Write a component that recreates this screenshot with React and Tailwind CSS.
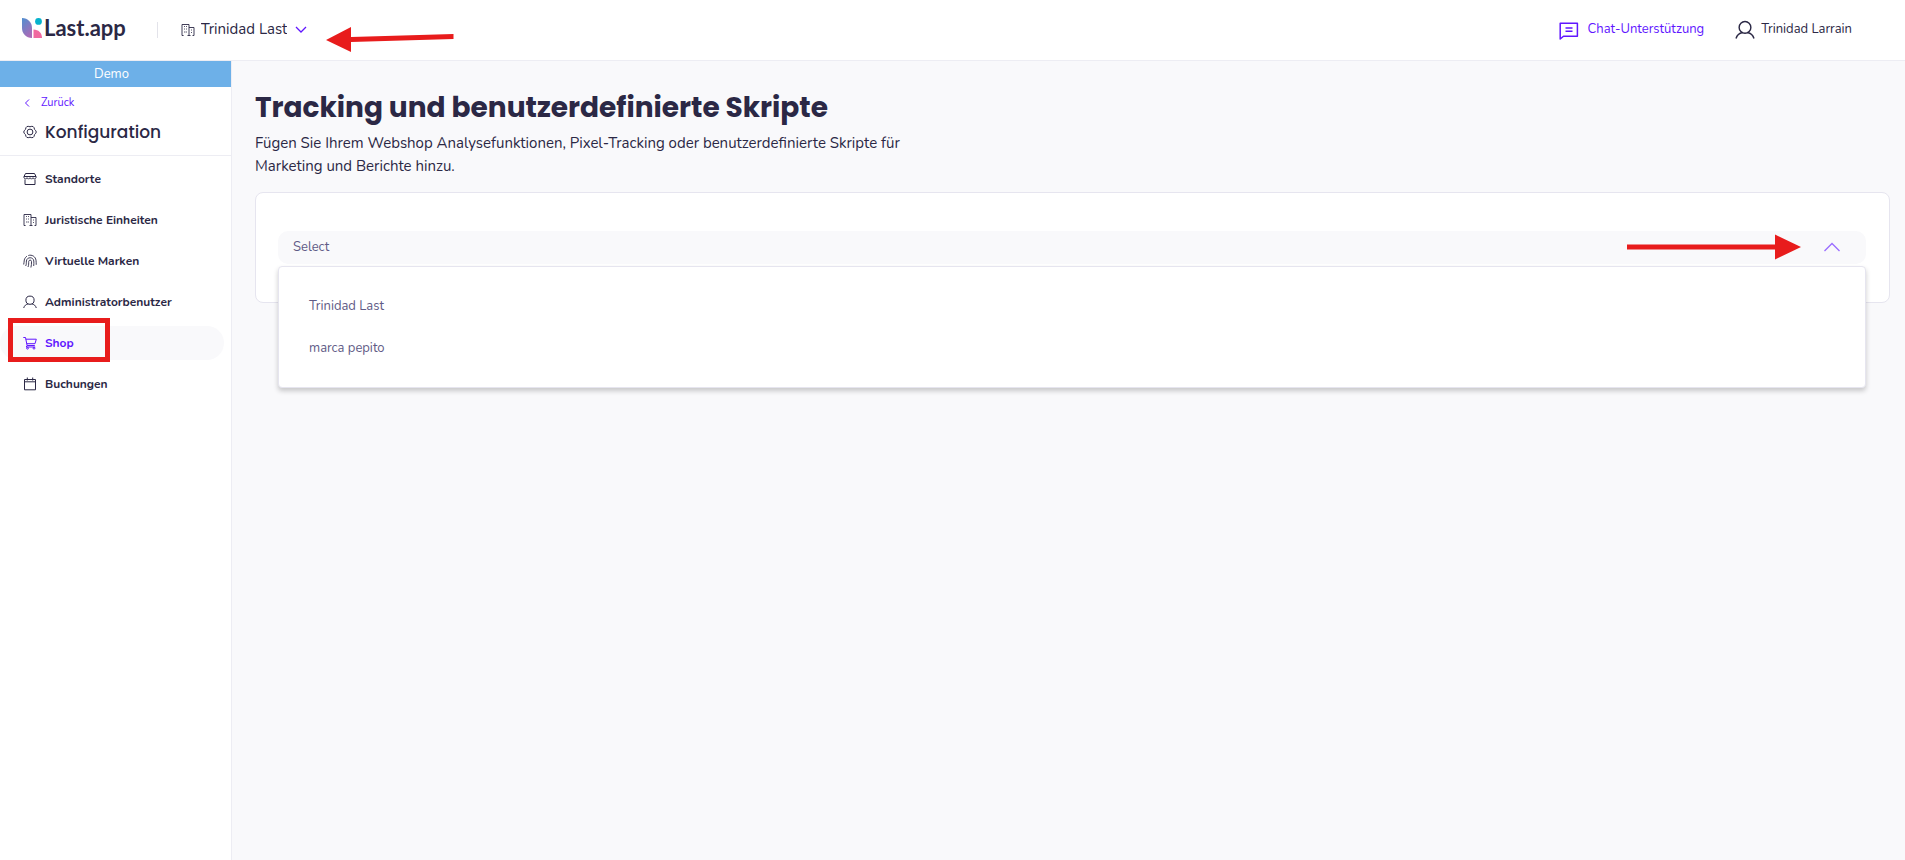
import React, { useState } from 'react';

const Icon = ({ children, className = 'w-[14px] h-[14px]', strokeWidth = 1 }) => (
  <svg
    viewBox="0 0 14 14"
    fill="none"
    stroke="currentColor"
    strokeWidth={strokeWidth}
    className={`shrink-0 ${className}`}
    aria-hidden="true"
  >
    {children}
  </svg>
);

const StoreIcon = () => (
  <Icon>
    <path d="M2.500 1.500h9M2.500 1.500 1 4.500h12l-1.500-3M2 7.500v5h10v-5" />
    <path d="M1 4.500v1.200l1.500 1.500L4 5.700l1.500 1.500L7 5.700l1.500 1.500L10 5.700l1.500 1.500L13 5.700V4.500" />
  </Icon>
);

const BuildingIcon = ({ className }) => (
  <Icon className={className} strokeWidth=".9">
    <path d="M2.600 12.500H1V1.500h7v11H6.500M8 4.500h5v8h-1.500M8 12.500h1.500" />
    <path d="M3 3.500h1M5 3.500h1M3 6h1M5 6h1M4.500 9H3M5 9h1M10 7h1M10 9.500h1" strokeWidth=".8" />
  </Icon>
);

const FingerprintIcon = () => (
  <Icon strokeWidth=".9">
    <path d="M.7 10.500C1.300 9 .8 7.600 1.300 5.900 1.800 4.100 2.800 2.900 4 2.200M5.300 1.500C9 .3 12.500 2.600 13 6.300c.2 1.600.2 3 .2 4.500" />
    <path d="M2.700 12c.9-1.800.5-3.400.7-5C3.900 2.600 10.400 2.700 10.800 7c.1 1.700.1 3.200-.1 5" />
    <path d="M5 13c.9-1.900.6-4 .7-5.500.2-1.900 2.700-1.900 2.800 0 .1 2-.1 4-.6 6" />
  </Icon>
);

const UserIcon = ({ className }) => (
  <Icon className={className}>
    <circle cx="7" cy="5.200" r="4.100" />
    <path d="M.7 13c.7-2.400 2.400-3.800 4.600-4.200M13.300 13c-.7-2.400-2.400-3.800-4.600-4.200" />
  </Icon>
);

const CartIcon = () => (
  <Icon>
    <path d="M.3 1.500h2.200l1.600 8h7.700M2.800 3.200h10.500L12 7.700H3.700" />
    <path d="M4.100 9.500 3.200 11h9" />
    <circle cx="4.500" cy="12.200" r=".9" />
    <circle cx="11" cy="12.200" r=".9" />
  </Icon>
);

const CalendarIcon = () => (
  <Icon>
    <path d="M1.500 2.500h11v10.300h-11zM1.500 4.800h11M4.300.5v3M9.700.5v3" />
  </Icon>
);

const GearIcon = () => (
  <Icon>
    <path d="M11.500 9.600Q11 13.900 7 12.200 3 13.900 2.500 9.600-1 7 2.500 4.400 3 .1 7 1.800 11 .1 11.500 4.400 15 7 11.500 9.600z" />
    <circle cx="7" cy="7" r="2.900" />
  </Icon>
);

const ChatIcon = () => (
  <svg viewBox="0 0 20 20" fill="none" stroke="currentColor" strokeWidth="1.500" className="w-5 h-5 shrink-0" aria-hidden="true">
    <path d="M1.200 19V3.200h17.200v13H4.500z" strokeLinejoin="round" />
    <path d="M6.500 8h7M6.500 11.300h7" />
  </svg>
);

const LogoMark = () => (
  <svg viewBox="0 0 20 20" className="w-5 h-5 shrink-0" aria-hidden="true">
    <defs>
      <linearGradient id="leaf" x1="0" y1="0" x2="0.500" y2="1">
        <stop offset="0" stopColor="#4f8fd0" />
        <stop offset="1" stopColor="#a86cb8" />
      </linearGradient>
    </defs>
    <path d="M0 0c6 0 10 4.500 10 10v10C4 20 0 15.500 0 10z" fill="url(#leaf)" />
    <path d="M11.500 11.500c5 0 8.500 3.500 8.500 8.500h-8.500z" fill="#f0699f" />
    <circle cx="16.500" cy="3.400" r="3.400" fill="#06b2cd" />
  </svg>
);

const menu = [
  { label: 'Standorte', icon: StoreIcon },
  { label: 'Juristische Einheiten', icon: BuildingIcon },
  { label: 'Virtuelle Marken', icon: FingerprintIcon },
  { label: 'Administratorbenutzer', icon: UserIcon },
  { label: 'Shop', icon: CartIcon, active: true },
  { label: 'Buchungen', icon: CalendarIcon },
];

const brands = ['Trinidad Last', 'marca pepito'];

export default function App() {
  const [open, setOpen] = useState(true);
  const [brand, setBrand] = useState('Select');

  const pickBrand = (name) => {
    setBrand(name);
    setOpen(false);
  };

  return (
    <div className="min-h-screen flex flex-col bg-[#f9f9fb] text-[#2b2845] font-['Nunito','Open_Sans',sans-serif]">
      {/* Header */}
      <header className="h-[61px] shrink-0 flex items-center justify-between bg-white border-b border-[#ededf3] pl-[22px] pr-[53px] pb-px">
        <div className="flex items-center">
          <a href="#" className="flex items-center gap-[2px] pb-1 font-['Lato',sans-serif] font-bold text-[22px] leading-6">
            <LogoMark />
            Last.app
          </a>
          <div className="w-px h-4 bg-[#e3e3ea] ml-[31px] mr-[23px]" />
          <div className="relative flex items-center gap-[6px]">
            <BuildingIcon />
            <select
              aria-label="Organisation"
              className="appearance-none bg-transparent text-[15px] pr-5 [field-sizing:content]"
            >
              <option>Trinidad Last</option>
            </select>
            <svg viewBox="0 0 12 8" className="absolute right-0 w-3 h-2 text-[#6116ff] pointer-events-none" fill="none" stroke="currentColor" strokeWidth="1.300" aria-hidden="true">
              <path d="m1 1 5 5 5-5" />
            </svg>
            <svg viewBox="0 0 128 26" className="absolute left-full -bottom-3 ml-[19px] w-32 h-[26px] pointer-events-none" fill="#e81c1c" aria-hidden="true">
              <path d="M0 13 25 0v10L127.500 7v5L25 15v10z" />
            </svg>
          </div>
        </div>
        <div className="flex items-center gap-[31px] text-[13px]">
          <a href="#" className="flex items-center gap-[9px] text-[#6116ff]">
            <ChatIcon />
            Chat-Unterstützung
          </a>
          <a href="#" className="flex items-center gap-[6px]">
            <UserIcon className="w-5 h-5" />
            Trinidad Larrain
          </a>
        </div>
      </header>

      <div className="flex-1 flex">
        {/* Sidebar */}
        <aside className="w-[232px] shrink-0 bg-white border-r border-[#ededf3]">
          <div className="h-[26px] bg-[#6db0e8] text-white text-[13px] leading-[26px] text-center pr-2">Demo</div>
          <div className="h-[69px] border-b border-[#ededf3] pl-[23px] pt-[7px]">
            <a href="#" className="flex items-center gap-[11px] pl-px text-[11px] leading-[18px] text-[#6116ff]">
              <svg viewBox="0 0 6 8" className="w-[6px] h-2" fill="none" stroke="currentColor" aria-hidden="true">
                <path d="M5 .5 1.500 4 5 7.500" />
              </svg>
              Zurück
            </a>
            <div className="flex items-center gap-2 mt-2 text-[17px] leading-6 font-medium font-['Poppins','Inter',sans-serif]">
              <GearIcon />
              Konfiguration
            </div>
          </div>
          <nav className="flex flex-col gap-[7px] pt-[6px] pr-[7px]">
            {menu.map(({ label, icon: ItemIcon, active }) => (
              <a
                key={label}
                href="#"
                className={`relative flex items-center gap-2 h-[34px] pl-[23px] rounded-full text-xs font-bold ${active ? 'bg-[#f9f9fb] text-[#6116ff]' : ''}`}
              >
                <ItemIcon />
                {label}
                {active && <span className="absolute left-2 -top-2 w-[102px] h-11 border-[5px] border-[#e81c1c]" />}
              </a>
            ))}
          </nav>
        </aside>

        {/* Content */}
        <main className="flex-1 pl-[23px] pr-[15px] pt-[29px]">
          <h1 className="text-[28px] leading-9 font-bold font-['Poppins','Inter',sans-serif]">
            Tracking und benutzerdefinierte Skripte
          </h1>
          <p className="mt-[6px] text-[15px] leading-[23px] max-w-[660px]">
            Fügen Sie Ihrem Webshop Analysefunktionen, Pixel-Tracking oder benutzerdefinierte Skripte für
            Marketing und Berichte hinzu.
          </p>
          <section className="mt-[14px] bg-white border border-[#e6e5ef] rounded-lg pl-[22px] pr-[23px] py-[38px]">
            <div className="relative text-[13px] text-[#5f5b86]">
              <button
                type="button"
                aria-haspopup="listbox"
                aria-expanded={open}
                onClick={() => setOpen(!open)}
                className="w-full h-[33px] flex items-center justify-between pl-[15px] pr-[25px] rounded-[10px] bg-[#f9f9fb]"
              >
                {brand}
                <span className="flex items-center gap-[22px] pb-[2px]">
                  <svg viewBox="0 0 174 26" className="w-[174px] h-[26px]" fill="#e81c1c" aria-hidden="true">
                    <path d="M0 10.500h148V.5l26 12.500-26 12.500v-10H0z" />
                  </svg>
                  <svg viewBox="0 0 18 10" className="w-[18px] h-[10px] text-[#9a6cff]" fill="none" stroke="currentColor" strokeWidth="1.300" aria-hidden="true">
                    <path d="m1.500 9 7.500-7.500L16.500 9" />
                  </svg>
                </span>
              </button>
              {open && (
                <ul
                  role="listbox"
                  className="absolute inset-x-0 top-full mt-[2px] bg-white border border-[#e6e5ef] rounded-[4px] pt-[19px] pb-[17px] shadow-[0_3px_5px_rgba(0,0,0,0.2)]"
                >
                  {brands.map((name) => (
                    <li
                      key={name}
                      role="option"
                      aria-selected={brand === name}
                      onClick={() => pickBrand(name)}
                      className="h-[42px] px-[30px] flex items-center cursor-pointer"
                    >
                      {name}
                    </li>
                  ))}
                </ul>
              )}
            </div>
          </section>
        </main>
      </div>
    </div>
  );
}
